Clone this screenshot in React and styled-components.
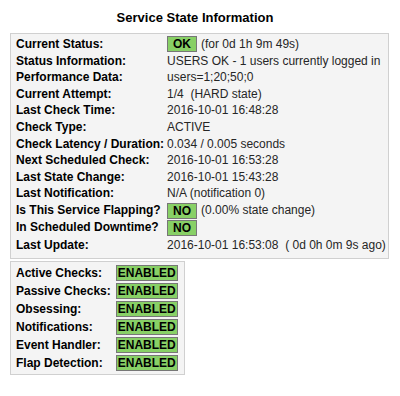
import React from 'react';
import styled, {createGlobalStyle} from 'styled-components';

const Global = createGlobalStyle`
    body {
        margin: 0;
        background: #fff;
        font-family: "Liberation Sans", Arial, sans-serif;
        color: #000;
    }
`;

const Page = styled.div`
    padding: 10px 0 0 10px;
    width: 390px;
    box-sizing: border-box;
`;

const Title = styled.div`
    font-size: 13px;
    font-weight: bold;
    text-align: center;
    padding-right: 10px;
    height: 23px;
`;

const InfoBox = styled.div`
    display: inline-grid;
    grid-template-columns: auto auto;
    column-gap: 3px;
    background-color: #f4f4f4;
    border: 1px solid #d0d0d0;
    padding: 2px 2px 4px 5px;
    font-size: 12px;
`;

const Label = styled.div`
    font-weight: bold;
    line-height: ${props => props.h || '16.6px'};
    white-space: nowrap;
`;

const Value = styled.div`
    display: flex;
    align-items: center;
    gap: 4px;
    color: #262626;
    white-space: pre;
    line-height: 16.6px;
`;

const Badge = styled.span`
    display: inline-block;
    background-color: #88d066;
    border: 1px solid #777;
    font-weight: bold;
    color: #000;
    text-align: center;
    line-height: 14px;
    padding: 0 ${props => props.wide ? '0' : '5px'};
    width: ${props => props.wide ? '60px' : 'auto'};
`;

const ToggleBox = styled(InfoBox)`
    margin-top: 2px;
    column-gap: 5px;
    row-gap: 2px;
    padding: 3px 6px 3px 5px;
`;

const rows = [
    ['Current Status:', <><Badge>OK</Badge><span>(for 0d 1h 9m 49s)</span></>],
    ['Status Information:', 'USERS OK - 1 users currently logged in'],
    ['Performance Data:', 'users=1;20;50;0'],
    ['Current Attempt:', '1/4  (HARD state)'],
    ['Last Check Time:', '2016-10-01 16:48:28'],
    ['Check Type:', 'ACTIVE'],
    ['Check Latency / Duration:', '0.034 / 0.005 seconds'],
    ['Next Scheduled Check:', '2016-10-01 16:53:28'],
    ['Last State Change:', '2016-10-01 15:43:28'],
    ['Last Notification:', 'N/A (notification 0)'],
    ['Is This Service Flapping?', <><Badge>NO</Badge><span>(0.00% state change)</span></>, '17.5px'],
    ['In Scheduled Downtime?', <><Badge>NO</Badge></>, '17.5px'],
    ['Last Update:', '2016-10-01 16:53:08  ( 0d 0h 0m 9s ago)'],
];

const toggles = ['Active Checks:', 'Passive Checks:', 'Obsessing:', 'Notifications:', 'Event Handler:', 'Flap Detection:'];

const App = () => {
    return (
        <Page>
            <Global />
            <Title>Service State Information</Title>
            <InfoBox>
                {rows.map(([label, value, h]) => (
                    <React.Fragment key={label}>
                        <Label h={h}>{label}</Label>
                        <Value>{value}</Value>
                    </React.Fragment>
                ))}
            </InfoBox>
            <div>
                <ToggleBox>
                    {toggles.map(label => (
                        <React.Fragment key={label}>
                            <Label h="16px">{label}</Label>
                            <Value><Badge wide>ENABLED</Badge></Value>
                        </React.Fragment>
                    ))}
                </ToggleBox>
            </div>
        </Page>
    )
}

export default App;
